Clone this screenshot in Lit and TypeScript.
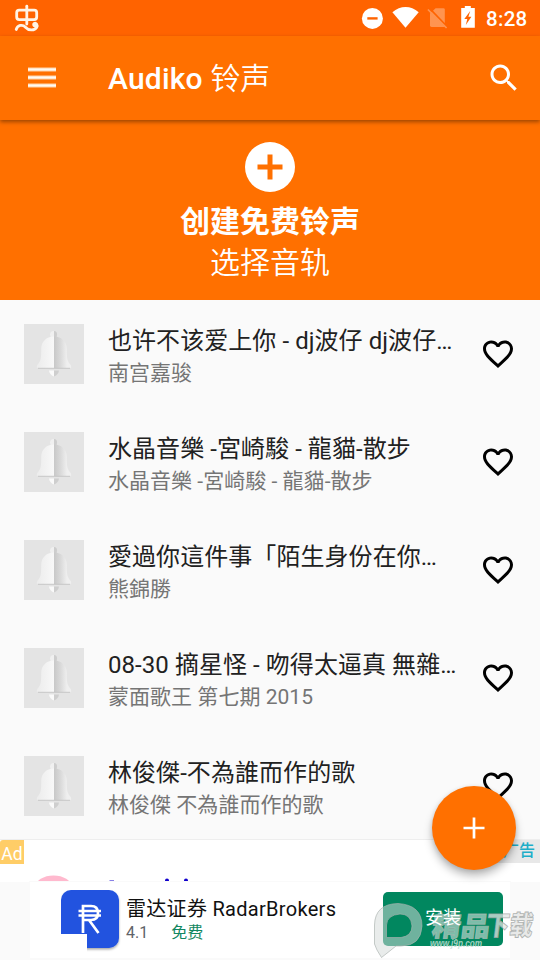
import { LitElement, html, css } from "lit";
import { customElement, property } from "lit/decorators.js";

const TRACKS = [
  { title: "也许不该爱上你 - dj波仔 dj波仔…", artist: "南宫嘉骏" },
  { title: "水晶音樂 -宮崎駿 - 龍貓-散步", artist: "水晶音樂 -宮崎駿 - 龍貓-散步" },
  { title: "愛過你這件事「陌生身份在你…", artist: "熊錦勝" },
  { title: "08-30 摘星怪 - 吻得太逼真 無雜…", artist: "蒙面歌王 第七期 2015" },
  { title: "林俊傑-不為誰而作的歌", artist: "林俊傑 不為誰而作的歌" },
];

@customElement("status-bar")
class StatusBar extends LitElement {
  static styles = css`
    :host { display: flex; height: 36px; box-sizing: border-box; background: #ff6300; color: #fff; padding: 0 11px 0 14px; align-items: center; justify-content: space-between; }
    .right { display: flex; align-items: center; height: 36px; }
    .time { font-size: 20.5px; font-weight: 500; width: 43px; margin-left: 11px; white-space: nowrap; line-height: 36px; padding-top: 2px; letter-spacing: .3px; }
    svg { display: block; }
  `;
  render() {
    return html`
      <svg width="26" height="30" viewBox="14 3 26 30" fill="none" stroke="#fff4e6" stroke-width="2.8" stroke-linecap="round" stroke-linejoin="round">
        <rect x="16.7" y="10.2" width="20" height="9.4" rx="2.5"/>
        <path d="M26.8 6.2V24"/>
        <path d="M16.2 29.5C17.5 25 22.5 24 25.5 27.2C28.5 30.6 34.5 31 36.6 27.5C38.2 24.6 35.8 22.4 34.3 23.4C32.9 24.4 33.8 26.2 35 25.8"/>
      </svg>
      <div class="right">
        <svg width="114" height="36" viewBox="361 0 114 36">
          <circle cx="372.4" cy="18.4" r="10.5" fill="#fff"/>
          <path d="M367.3 18.4h10.3" stroke="#ff6300" stroke-width="2.4"/>
          <path d="M392.4 12.2C400.4 5.2 410.7 5.2 418.7 12.2L405.5 27.7Z" fill="#fff"/>
          <path d="M435.6 8.2H443.4Q444.8 8.2 444.8 9.6V27H431.5Q430 27 430 25.6V13.4Z" fill="#ff9450"/>
          <path d="M430 8.800L447.500 27" stroke="#ff6300" stroke-width="1.800"/>
          <path d="M427.9 9.5L446.6 28" stroke="#ff9450" stroke-width="1.7"/>
          <path d="M461.2 8h3.6V6h6v2h4v19.7H461.2Z" fill="#fff"/>
          <path d="M470.2 11L464.3 19H467.3L465.8 25L471.4 16.7H468.4Z" fill="#ff6300"/>
        </svg>
        <span class="time">8:28</span>
      </div>`;
  }
}

@customElement("track-row")
class TrackRow extends LitElement {
  @property() name = "";
  @property() artist = "";
  static styles = css`
    :host { display: flex; height: 108px; box-sizing: border-box; padding: 24px 24px 0; align-items: flex-start; }
    .thumb { width: 60px; height: 60px; background: #e4e4e4; flex: none; }
    .text { margin-left: 24px; width: 360px; flex: none; white-space: nowrap; }
    .title { font-size: 24px; line-height: 34px; height: 34px; color: #212121; letter-spacing: .06px; }
    .artist { font-size: 21px; line-height: 30px; height: 30px; color: #757575; letter-spacing: .03px; }
    .heart { display: block; margin: 12px 0 0 12px; flex: none; }
  `;
  render() {
    return html`
      <svg class="thumb" viewBox="0 0 60 60">
        <defs>
          <linearGradient id="l"><stop offset="0" stop-color="#ececec"/><stop offset="1" stop-color="#f8f8f8"/></linearGradient>
          <linearGradient id="r" gradientUnits="userSpaceOnUse" x1="30" x2="43" y1="0" y2="0"><stop offset="0" stop-color="#c8c8c8"/><stop offset=".5" stop-color="#d9d9d9"/><stop offset="1" stop-color="#efefef"/></linearGradient>
        </defs>
        <path d="M26 10.500a3.500 3.500 0 0 1 4-3.500V14H27Z" fill="#f0f0f0"/>
        <path d="M30 7a3.400 3.400 0 0 1 3 3.500L32.500 14H30Z" fill="#cdcdcd"/>
        <path d="M30 12.500C22 12.500 17.200 18 17.200 25C17.200 34 17 37 13.300 41Q12 43.700 14 44.200H30Z" fill="url(#l)"/>
        <path d="M30 12.500C38 12.500 42.800 18 42.800 25C42.800 34 43 37 46.700 41Q48 43.700 46 44.200H30Z" fill="url(#r)"/>
        <path d="M14 44.300H46" stroke="#c4c4c4" stroke-width=".9"/>
        <path d="M25 46.500H30V52.500Q25.500 50.500 25 46.500Z" fill="#fafafa"/>
        <path d="M30 46.500H35Q34.500 50.500 30 52.500Z" fill="#cecece"/>
      </svg>
      <div class="text"><div class="title">${this.name}</div><div class="artist">${this.artist}</div></div>
      <svg class="heart" width="36" height="36" viewBox="0 0 24 24"><path d="M16.5 3c-1.74 0-3.41.81-4.5 2.09C10.91 3.81 9.24 3 7.5 3 4.42 3 2 5.42 2 8.5c0 3.78 3.4 6.86 8.55 11.54L12 21.35l1.45-1.32C18.6 15.36 22 12.28 22 8.5 22 5.42 19.58 3 16.5 3zm-4.4 15.55l-.1.1-.1-.1C7.14 14.24 4 11.39 4 8.5 4 6.5 5.5 5 7.5 5c1.54 0 3.04.99 3.57 2.36h1.87C13.46 5.99 14.96 5 16.5 5c2 0 3.5 1.5 3.5 3.5 0 2.89-3.14 5.74-7.9 10.05z"/></svg>`;
  }
}

@customElement("ad-banner")
class AdBanner extends LitElement {
  static styles = css`
    :host { display: block; position: relative; height: 121px; box-sizing: border-box; border-top: 1px solid #eee; background: #fff; }
    .strip { display: flex; height: 42px; justify-content: space-between; align-items: flex-start; }
    .tag { width: 24px; height: 24px; background: #ffcd67; color: #fff; font-size: 17.5px; line-height: 28px; text-align: center; border-top-left-radius: 3px; }
    .peek { display: block; width: 180px; height: 42px; margin-right: auto; }
    .label { width: 48px; height: 23px; box-sizing: border-box; padding-right: 5px; background: #e8e8e8; color: #1eaec8; font-size: 16px; line-height: 22px; text-align: right; font-weight: 500; }
    .card { display: flex; box-sizing: border-box; height: 76px; margin: 0 30px; background: #fff; padding: 8px 7px 0 31px; outline: 1px solid #fafafa; }
    .under { background: #fafafa; height: 78px; }
    .logo { display: block; flex: none; width: 62px; height: 64px; }
    .info { margin-left: 3px; width: 257px; flex: none; }
    .name { font-size: 20px; line-height: 26px; padding-top: 6px; color: #111; white-space: nowrap; letter-spacing: .3px; }
    .meta { display: flex; font-size: 16px; line-height: 22px; color: #5f6368; }
    .free { margin-left: 23px; color: #128762; }
    .install { width: 120px; height: 54px; margin-top: 2px; border-radius: 5px; background: #01875f; color: #fff; font-size: 18px; line-height: 51px; text-align: center; flex: none; }
    .install span { position: relative; z-index: 1; }
    .mark { position: absolute; left: 372px; top: 60px; width: 168px; height: 60px; }
    .big { font: 900 27px "Noto Sans CJK SC", sans-serif; }
    .url { font: italic bold 10.5px "Liberation Sans", sans-serif; }
  `;
  render() {
    return html`
      <div class="strip">
        <div class="tag">Ad</div>
        <svg class="peek" viewBox="24 840 180 42">
          <ellipse cx="53.5" cy="887" rx="18" ry="11.5" fill="#ffb9ce"/>
          <path d="M109.500 880.500h4.500v1.500h-4.500Z" fill="#10c"/>
          <path d="M165 882v-1.400a2 2 0 0 1 4 0V882ZM184 882v-1.400a2 2 0 0 1 4 0V882Z" fill="#10c"/>
        </svg>
        <div class="label">广告</div>
      </div>
      <div class="under"><div class="card">
        <svg class="logo" viewBox="61 890 62 64">
          <defs><filter id="d" x="-10%" y="-10%" width="125%" height="130%"><feDropShadow dx="0" dy="1.5" stdDeviation="1.2" flood-opacity=".35"/></filter></defs>
          <rect x="61" y="890" width="58" height="58" rx="10" fill="#2053df" filter="url(#d)"/>
          <path d="M83 933V906H91Q98 906 98 913Q98 920 91 920H83M89 920L98.5 933M78.5 911H101M78.5 915.5H101" fill="none" stroke="#fff" stroke-width="2.7"/>
          <path d="M60 934H87V952H60Z" fill="#fff"/>
        </svg>
        <div class="info"><div class="name">雷达证券 RadarBrokers</div><div class="meta"><span>4.1</span><span class="free">免费</span></div></div>
        <div class="install"><span>安装</span></div>
      </div></div>
      <svg class="mark" viewBox="372 900 168 60">
        <path fill-rule="evenodd" d="M374.500 925Q375 904 398 903.500Q422 905 422 926Q421 946 401 946H396L391 950L381.500 957.500L377 950L374.500 944ZM386.500 937.500H401Q412 936 412 926Q411 914 400 914Q387 915 386.500 925Z" fill="#d5dad8" fill-opacity=".52" stroke="#a9b1ae" stroke-opacity=".65" stroke-width="1"/>
        <g transform="translate(431 936) skewX(-7)"><text class="big" textLength="58" lengthAdjust="spacingAndGlyphs" fill="#e9eeec" fill-opacity=".55" stroke="#b0bcb6" stroke-opacity=".7" stroke-width=".9">精品</text></g>
        <g transform="translate(485 935) skewX(-7)"><text class="big" textLength="47" lengthAdjust="spacingAndGlyphs" fill="#e2e4e3" fill-opacity=".75" stroke="#a0a4a2" stroke-opacity=".8" stroke-width=".9">下载</text></g>
        <text class="url" x="430" y="946.500" textLength="52" lengthAdjust="spacingAndGlyphs" fill="#c4e0d5" fill-opacity=".85">www.j9p.com</text>
      </svg>`;
  }
}

@customElement("app-root")
class AppRoot extends LitElement {
  static styles = css`
    :host { display: block; position: relative; width: 540px; height: 960px; overflow: hidden; background: #fafafa; font-family: Roboto, "Noto Sans CJK SC", sans-serif; }
    .bar { position: relative; z-index: 1; display: flex; align-items: center; box-sizing: border-box; height: 84px; padding: 0 18px 0 24px; background: #ff7000; color: #fff; box-shadow: 0 2px 4px rgba(0,0,0,.38); }
    .bar h1 { margin: 2px auto 0 48px; font-size: 30px; font-weight: 500; line-height: 84px; letter-spacing: .2px; }
    .bar h1 span { font-weight: 350; letter-spacing: -.3px; }
    .bar svg { display: block; }
    .hero { display: flex; flex-direction: column; align-items: center; box-sizing: border-box; height: 180px; padding-top: 22px; background: #ff7000; color: #fff; font-size: 30px; line-height: 42px; }
    .hero b { font-weight: 700; margin-top: 9px; }
    .hero .thin { font-weight: 350; margin-top: -1px; }
    .list { height: 539px; overflow: hidden; }
    .fab { position: absolute; left: 432px; top: 786px; width: 84px; height: 84px; border-radius: 50%; background: #ff7000; box-shadow: 0 6px 9px rgba(0,0,0,.26), 0 1px 4px rgba(0,0,0,.12); display: grid; place-items: center; }
  `;
  render() {
    return html`
      <status-bar></status-bar>
      <header class="bar">
        <svg width="36" height="36" viewBox="24 60 36 36" stroke="#ffd2a8" stroke-width="4"><path d="M28 69.500H56M28 77.500H56M28 85.500H56"/><path stroke="#fffaf2" stroke-width="2" d="M28 69.500H56M28 77.500H56M28 85.500H56"/></svg>
        <h1>Audiko <span>铃声</span></h1>
        <svg width="36" height="36" viewBox="0 0 24 24" fill="#fff"><path d="M15.500 14h-.79l-.28-.27C15.410 12.590 16 11.110 16 9.500 16 5.910 13.090 3 9.500 3S3 5.910 3 9.500 5.910 16 9.500 16c1.610 0 3.090-.59 4.230-1.570l.27.28v.79l5 4.990L20.490 19l-4.990-5zm-6 0C7.010 14 5 11.990 5 9.500S7.010 5 9.500 5 14 7.010 14 9.500 11.990 14 9.500 14z"/></svg>
      </header>
      <section class="hero">
        <svg width="50" height="50" viewBox="0 0 50 50"><circle cx="25" cy="25" r="25" fill="#fff"/><path d="M25 12.500V37.500M12.500 25H37.500" stroke="#ff7000" stroke-width="5"/></svg>
        <b>创建免费铃声</b>
        <span class="thin">选择音轨</span>
      </section>
      <main class="list">${TRACKS.map((t) => html`<track-row .name=${t.title} .artist=${t.artist}></track-row>`)}</main>
      <ad-banner></ad-banner>
      <div class="fab"><svg width="22" height="22" viewBox="0 0 22 22"><path d="M11 .500V21.500M.500 11H21.500" stroke="#fff" stroke-width="2.700"/></svg></div>`;
  }
}
